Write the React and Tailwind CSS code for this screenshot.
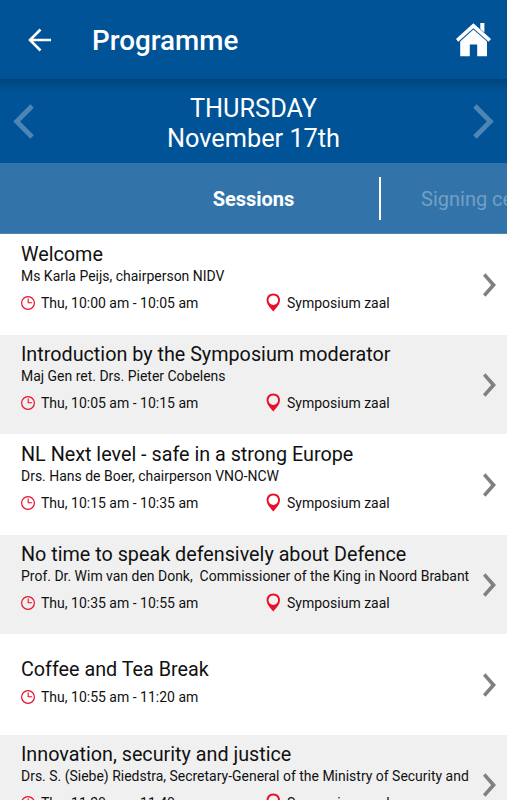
const sessions = [
  { title: 'Welcome', speaker: 'Ms Karla Peijs, chairperson NIDV', time: 'Thu, 10:00 am - 10:05 am', place: 'Symposium zaal' },
  { title: 'Introduction by the Symposium moderator', speaker: 'Maj Gen ret. Drs. Pieter Cobelens', time: 'Thu, 10:05 am - 10:15 am', place: 'Symposium zaal' },
  { title: 'NL Next level - safe in a strong Europe', speaker: 'Drs. Hans de Boer, chairperson VNO-NCW', time: 'Thu, 10:15 am - 10:35 am', place: 'Symposium zaal' },
  { title: 'No time to speak defensively about Defence', speaker: 'Prof. Dr. Wim van den Donk,  Commissioner of the King in Noord Brabant', time: 'Thu, 10:35 am - 10:55 am', place: 'Symposium zaal' },
  { title: 'Coffee and Tea Break', time: 'Thu, 10:55 am - 11:20 am' },
  { title: 'Innovation, security and justice', speaker: 'Drs. S. (Siebe) Riedstra, Secretary-General of the Ministry of Security and', time: 'Thu, 11:20 am - 11:40 am', place: 'Symposium zaal' },
];

function BackIcon() {
  return (
    <svg className="ml-[27px] h-6 w-6 shrink-0" viewBox="0 0 24 24" fill="none" stroke="#fff" strokeWidth="2.6">
      <path d="M24 12H3M13.5 1.5L3 12l10.5 10.5" />
    </svg>
  );
}

function HomeIcon() {
  return (
    <svg className="h-[34px] w-[36px] shrink-0" viewBox="0 0 36 34" fill="#fff">
      <path d="M24.3 0H28.4V9.5L24.3 6Z" />
      <path d="M17.4 0.3L35 16L32.6 18.7L17.4 5.3L2.2 18.7L0 16Z" />
      <path d="M17.4 6.6L31 18.6V33.3H21.2V21.6H13.8V33.3H4.2V18.6Z" />
    </svg>
  );
}

function DayArrow({ flip }) {
  return (
    <svg className={flip ? 'h-[35px] w-[21px] rotate-180' : 'h-[35px] w-[21px]'} viewBox="0 0 21 35" fill="#4d86b5">
      <path d="M3.7 0.3L20.7 17.5L3.7 34.7L0.2 31.2L13.8 17.5L0.2 3.8Z" />
    </svg>
  );
}

function RowArrow() {
  return (
    <svg className="ml-px h-6 w-[13px] shrink-0" viewBox="0 0 13 24" fill="#808080">
      <path d="M2.5 0.3L13 12L2.5 23.7L0 21.2L8.1 12L0 2.8Z" />
    </svg>
  );
}

function ClockIcon() {
  return (
    <svg className="mr-[6px] h-[14px] w-[14px] shrink-0" viewBox="0 0 14 14" fill="none" stroke="#e8112a">
      <circle cx="7" cy="7" r="6.4" strokeWidth="1.2" />
      <path d="M7.2 2.5V6.8h3.8" strokeWidth="1.1" />
    </svg>
  );
}

function PinIcon() {
  return (
    <svg className="mb-[2px] mr-[6px] h-[19px] w-[15px] shrink-0" viewBox="0 0 15 19" fill="#e8112a" fillRule="evenodd">
      <path d="M7.3 0.6C3.4 0.6 0.6 3.4 0.6 7C0.6 11.2 3.8 14.6 7.3 18.4C10.8 14.6 14 11.2 14 7C14 3.4 11.2 0.6 7.3 0.6ZM7.3 2.4A4.8 4.8 0 0 1 7.3 12A4.8 4.8 0 0 1 7.3 2.4Z" />
    </svg>
  );
}

function SessionRow({ session, shaded }) {
  return (
    <li className={shaded ? 'flex h-[99px] shrink-0 items-start bg-[#f0f0f0] pl-[21px]' : 'flex h-[101px] shrink-0 items-start bg-white pl-[21px] pt-px'}>
      <div className={session.speaker ? 'w-[461px] shrink-0 whitespace-pre pt-2' : 'w-[461px] shrink-0 whitespace-pre pt-[23px]'}>
        <h2 className="h-[23px] text-[19.75px] leading-6">{session.title}</h2>
        {session.speaker && <p className="h-5 text-[13.98px] leading-5">{session.speaker}</p>}
        <div className={session.speaker ? 'mt-[7px] flex h-5 items-center text-[14px]' : 'mt-[6px] flex h-5 items-center text-[14px]'}>
          <span className="flex w-[245px] items-center"><ClockIcon />{session.time}</span>
          {session.place && <span className="flex items-center"><PinIcon />{session.place}</span>}
        </div>
      </div>
      <div className="pt-[38px]"><RowArrow /></div>
    </li>
  );
}

export default function App() {
  return (
    <main className="flex h-[800px] w-[507px] flex-col overflow-hidden bg-white font-['Roboto',sans-serif] text-[#111]">
      <header className="flex h-[79px] shrink-0 items-center bg-[#005397] text-white">
        <BackIcon />
        <h1 className="ml-[41px] mt-[3px] text-[27.8px] font-medium leading-8">Programme</h1>
        <div className="ml-auto mr-[15px]"><HomeIcon /></div>
      </header>
      <section className="flex h-[84px] shrink-0 items-center justify-between bg-[#005397] bg-[linear-gradient(to_bottom,#004278_0px,#004a87_4px,#005397_12px)] px-[13px] text-white">
        <DayArrow flip />
        <p className="pt-[5px] text-center text-[25.3px] leading-[30px]">THURSDAY<br />November 17th</p>
        <DayArrow />
      </section>
      <nav className="flex h-[71px] shrink-0 items-center overflow-hidden whitespace-nowrap border-b border-[#4b86b5] bg-[#3274aa] text-[20px] text-white">
        <span className="ml-[127px] w-[253px] shrink-0 pt-[2px] text-center font-bold">Sessions</span>
        <span className="-ml-px h-[43px] w-[1.5px] shrink-0 bg-white" />
        <span className="ml-[40.5px] pt-[2px] text-[#739fc5]">Signing ceremony</span>
      </nav>
      <ul className="flex flex-col">
        {sessions.map((session, i) => <SessionRow key={session.title} session={session} shaded={i % 2 === 1} />)}
      </ul>
    </main>
  );
}
